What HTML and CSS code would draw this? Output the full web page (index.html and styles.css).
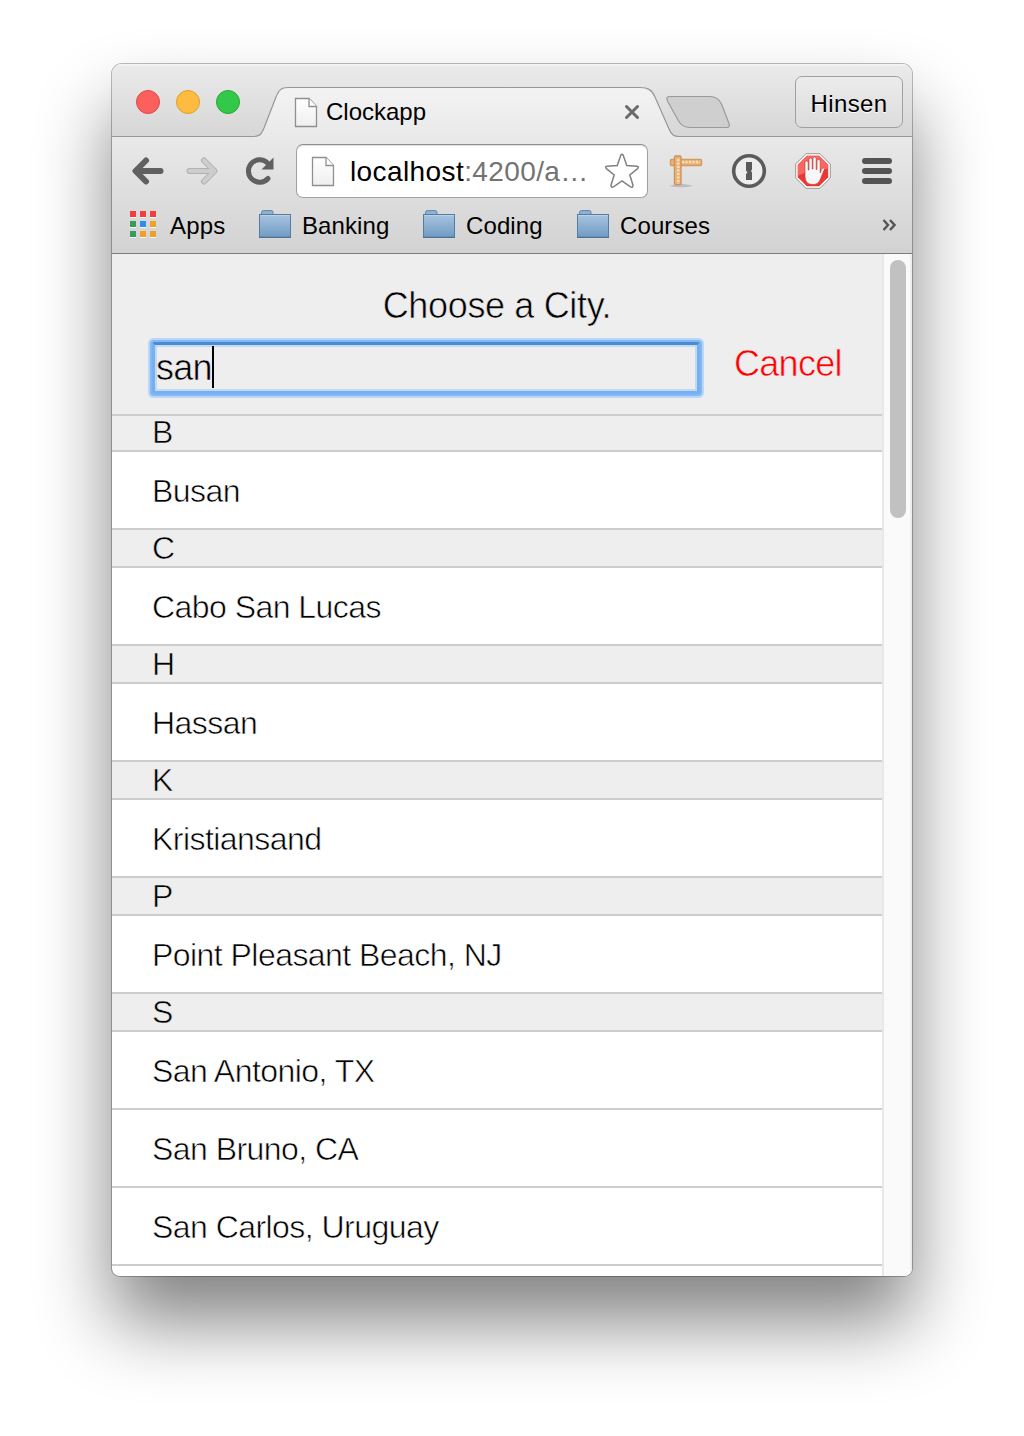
FILE: index.html
```
<!DOCTYPE html>
<html lang="en">
<head>
<meta charset="utf-8">
<title>Clockapp</title>
<link rel="stylesheet" href="styles.css">
</head>
<body>
<svg width="0" height="0" class="defs">
  <defs>
    <linearGradient id="folderFill" x1="0" y1="0" x2="0" y2="1"><stop offset="0" stop-color="#a9c4e0"/><stop offset="1" stop-color="#6f9bc3"/></linearGradient>
    <linearGradient id="pageFill" x1="0" y1="0" x2="0" y2="1"><stop offset="0" stop-color="#fff"/><stop offset="1" stop-color="#efefef"/></linearGradient>
    <symbol id="page" viewBox="0 0 24 32"><path d="M1.5 1.5h13.5l7.500 8v20h-21z" fill="url(#pageFill)" stroke="#8f8f8f" stroke-width="1.3"/><path d="M15 1.5v8h7.500" fill="#fff" stroke="#8f8f8f" stroke-width="1.3"/></symbol>
    <symbol id="folder" viewBox="0 0 32 28"><path d="M2.500 5V2.500Q2.500.6 4.500.6h8Q14 .6 14 2.500V5" fill="#8fb1d2" stroke="#5f86ac"/><rect x=".5" y="4.500" width="31" height="23" fill="url(#folderFill)" stroke="#557da4"/><path d="M1 5.600h30" stroke="#bed3e7"/><path d="M0 27.400h32" stroke="#4c7092" stroke-width="1.200"/></symbol>
  </defs>
</svg>
<div class="window">
  <header class="chrome">
    <div class="tabstrip">
      <svg class="tab-shape" width="800" height="74" viewBox="0 0 800 74">
        <defs><linearGradient id="tabFill" x1="0" y1="0" x2="0" y2="1"><stop offset="0" stop-color="#f3f3f3"/><stop offset="1" stop-color="#e9e9e9"/></linearGradient></defs>
        <path d="M-2 76V72.500H142C148 72.500 149.500 70 152 64L164 33C167 26 169 23.500 176 23.500H528C536 23.500 540 26 543 33L557 65C559.500 71 562 72.500 567 72.500H802V76z" fill="url(#tabFill)" stroke="#979797" stroke-width="1.200"/>
        <path d="M558 32.500H598C604 32.500 607 34.500 609.500 40L617 59.500C618 62 617 63.500 615 63.500H578C572 63.500 569 61.500 566 56L555.500 37C554 34 555 32.500 558 32.500z" fill="#cfcfcf" stroke="#9a9a9a" stroke-width="1.200"/>
      </svg>
      <div class="lights"><i class="light red"></i><i class="light yellow"></i><i class="light green"></i></div>
      <div class="tab">
        <svg width="24" height="32"><use href="#page"/></svg>
        <span class="tab-title">Clockapp</span>
        <svg width="16" height="16" viewBox="0 0 16 16"><path d="M2.500 2.500l11 11M13.500 2.500l-11 11" stroke="#6a6a6a" stroke-width="3" stroke-linecap="round"/></svg>
      </div>
      <div class="profile">Hinsen</div>
    </div>
    <div class="toolbar">
      <svg width="32" height="28" viewBox="0 0 32 28"><path d="M14 3.500L3.500 14 14 24.500M5 14h23.500" fill="none" stroke="#606060" stroke-width="6" stroke-linecap="round" stroke-linejoin="round"/></svg>
      <svg width="32" height="28" viewBox="0 0 32 28"><path d="M18 3.500L28.500 14 18 24.500M27 14H3.500" fill="none" stroke="#b0b0b0" stroke-width="6" stroke-linecap="round" stroke-linejoin="round"/><path d="M18 3.500L28.500 14 18 24.500M27 14H3.500" fill="none" stroke="#cdcdcd" stroke-width="4" stroke-linecap="round" stroke-linejoin="round"/></svg>
      <svg class="reload" width="28" height="28" viewBox="0 0 28 28"><path d="M22 21.500A11.200 11.200 0 1 1 21.500 6" fill="none" stroke="#606060" stroke-width="5" stroke-linecap="round"/><path d="M27.500 .5V12.500H15.500z" fill="#606060"/></svg>
      <div class="omnibox">
        <svg width="24" height="32"><use href="#page"/></svg>
        <span class="url">localhost<span class="path">:4200/a…</span></span>
        <svg width="36" height="36" viewBox="0 0 36 36"><path d="M16.800 2.200Q18 .2 19.200 2.200L22.800 12.600 33 13.200Q35.500 13.700 33.600 15.600L25.800 22 29 32.200Q29 35 26.500 33.900L18 28 9.500 33.900Q7 35 7 32.200L10.200 22 2.400 15.600Q.5 13.700 3 13.200L13.200 12.600z" fill="#fff" stroke="#808080" stroke-width="1.500"/></svg>
      </div>
      <div class="extensions">
        <svg width="36" height="36" viewBox="0 0 36 36"><path d="M1 33q12-4 24 0-12 2.500-24 0" fill="#bcbcbc"/><rect x="2.500" y="6.500" width="31" height="6" rx="1" fill="#e9b57c" stroke="#d39a62" stroke-width="1.400"/><path d="M14 9h18" stroke="#f9dfb8" stroke-width="2.500" stroke-dasharray="2 1.500"/><rect x="6.500" y="3" width="6.500" height="28.500" rx="1" fill="#e9b57c" stroke="#d0935a" stroke-width="1.400"/><path d="M10.300 6v25" stroke="#f9dfb8" stroke-width="2.500" stroke-dasharray="2 1.500"/></svg>
        <svg width="36" height="36" viewBox="0 0 36 36"><circle cx="18" cy="18" r="15.300" fill="#eee" stroke="#5b5b5b" stroke-width="3.600"/><path d="M15 9h6v7.500l-1 1.500 1 1.500V27h-6v-6l1.500-1.500L15 17.500z" fill="#5a5a5a"/></svg>
        <svg width="36" height="36" viewBox="0 0 36 36"><path d="M11 .7h14L35.300 11v14L25 35.300H11L.7 25V11z" fill="#fff" stroke="#969696"/><path d="M11.800 2.800h12.400l9 9v12.400l-9 9H11.800l-9-9V11.800z" fill="#ec3832"/><path d="M11.800 2.800h12.400l9 9v4q-15 0-30.400 7V11.800z" fill="#fa6762"/><path d="M10 20V9.500a1.600 1.600 0 0 1 3.200 0V17h.8V6.500a1.600 1.600 0 0 1 3.200 0V16h.8V5.500a1.600 1.600 0 0 1 3.200 0V16.500h.8V8a1.600 1.600 0 0 1 3.200 0V20L26.500 16q2-1.800 3 0L25 27q-2 4.500-7 4.500-8 0-8-8z" fill="#f7f7f7" stroke="#b43a35" stroke-width=".6"/></svg>
        <svg width="32" height="28" viewBox="0 0 32 28"><path d="M4 4h24M4 14h24M4 24h24" stroke="#545454" stroke-width="6" stroke-linecap="round"/></svg>
      </div>
    </div>
    <nav class="bookmarks">
      <div class="apps-icon"><i class="r"></i><i class="r"></i><i class="r"></i><i class="g"></i><i class="b"></i><i class="y"></i><i class="g"></i><i class="y"></i><i class="y"></i></div>
      <span class="apps-label">Apps</span>
      <div class="bookmark"><svg width="32" height="28"><use href="#folder"/></svg><span>Banking</span></div>
      <div class="bookmark"><svg width="32" height="28"><use href="#folder"/></svg><span>Coding</span></div>
      <div class="bookmark"><svg width="32" height="28"><use href="#folder"/></svg><span>Courses</span></div>
      <svg class="more" width="14" height="12" viewBox="0 0 14 12"><path d="M1.500 1l4.500 5-4.500 5M8 1l4.500 5L8 11" fill="none" stroke="#555" stroke-width="2.400"/></svg>
    </nav>
  </header>
  <div class="viewport">
    <main class="page">
      <section class="search">
        <h1>Choose a City.</h1>
        <div class="search-row">
          <div class="field"><span>san</span><i class="caret"></i></div>
          <a class="cancel">Cancel</a>
        </div>
      </section>
      <h2 class="letter first">B</h2>
      <div class="city">Busan</div>
      <h2 class="letter">C</h2>
      <div class="city">Cabo San Lucas</div>
      <h2 class="letter">H</h2>
      <div class="city">Hassan</div>
      <h2 class="letter">K</h2>
      <div class="city">Kristiansand</div>
      <h2 class="letter">P</h2>
      <div class="city">Point Pleasant Beach, NJ</div>
      <h2 class="letter">S</h2>
      <div class="city">San Antonio, TX</div>
      <div class="city">San Bruno, CA</div>
      <div class="city">San Carlos, Uruguay</div>
      <div class="city"></div>
    </main>
    <div class="scrollbar"><div class="thumb"></div></div>
  </div>
</div>
</body>
</html>
```
FILE: styles.css
```
* { box-sizing: border-box; }
html, body { margin: 0; height: 1436px; overflow: hidden; background: #fff; }
body { padding: 64px 112px 160px; font-family: "Liberation Sans", Arial, sans-serif; color: #000; }
.defs { position: absolute; }
svg { display: block; flex: none; }

.window {
  width: 800px; height: 1212px; border-radius: 10px 10px 8px 8px;
  display: flex; flex-direction: column; background: #fff;
  box-shadow: 0 0 0 1px rgba(0,0,0,.26), 0 46px 74px rgba(0,0,0,.49);
}
.chrome {
  flex: none; height: 190px; border-radius: 10px 10px 0 0; overflow: hidden;
  border-bottom: 1px solid #7d7d7d; background: linear-gradient(#e9e9e9 73px, #d2d2d2);
}
.tabstrip {
  position: relative; height: 73px; display: flex; align-items: flex-start;
  background: linear-gradient(#ebebeb, #d6d6d6); box-shadow: inset 0 2px 0 #f3f3f3;
}
.tab-shape { position: absolute; left: 0; top: 0; }
.lights { position: relative; display: flex; gap: 16px; padding: 26px 0 0 24px; width: 182px; }
.light { width: 24px; height: 24px; border-radius: 50%; border: 1px solid; }
.red { background: #fc605c; border-color: #e2463f; }
.yellow { background: #fdbc40; border-color: #dfa023; }
.green { background: #34c84a; border-color: #20a931; }
.tab { position: relative; display: flex; align-items: center; width: 346px; height: 32px; margin-top: 32px; }
.tab > svg:first-child { margin-top: 1px; }
.tab-title { flex: 1; padding-left: 8px; font-size: 24px; line-height: 32px; }
.profile {
  position: relative; width: 108px; height: 52px; margin: 12px 9px 0 auto; border: 1px solid #a0a0a0; border-radius: 7px;
  background: linear-gradient(#ececec, #dcdcdc); font-size: 24px; letter-spacing: .4px; line-height: 53px; text-align: center;
  text-shadow: 0 1px 0 #fff;
}
.toolbar { display: flex; align-items: center; height: 68px; padding: 0 19px 0 20px; }
.toolbar > svg + svg { margin-left: 22px; }
.toolbar > .reload { margin-left: 28px; }
.omnibox {
  display: flex; align-items: center; width: 352px; height: 54px; margin: 0 20px 0 22px; padding: 0 7px 0 14px;
  background: #fff; border: 1px solid #a2a2a2; border-top-color: #8e8e8e; border-radius: 7px; box-shadow: inset 0 1px 1px #ddd;
}
.omnibox > svg:first-child { margin-top: 1px; }
.url { flex: 1; padding: 2px 0 0 15px; font-size: 28px; letter-spacing: .4px; line-height: 32px; white-space: nowrap; }
.path { color: #737373; }
.extensions { display: flex; flex: 1; align-items: center; gap: 28px; }
.extensions svg:first-child { margin-right: -1px; }
.extensions svg:last-child { margin-left: auto; }
.bookmarks { display: flex; align-items: center; height: 44px; padding: 0 16px 4px 18px; font-size: 24px; line-height: 28px; }
.apps-icon { display: grid; grid-template-columns: repeat(3, 6px); grid-auto-rows: 6px; gap: 4px; margin-top: -2px; }
.apps-icon i { box-shadow: 0 1px 0 #fff; }
.r { background: #f43b3e; } .g { background: #3a9c5a; } .b { background: #2b8df5; } .y { background: #f0a025; }
.apps-label { margin: 2px 0 0 14px; width: 89px; letter-spacing: .2px; }
.bookmark { display: flex; gap: 11px; width: 164px; letter-spacing: .1px; }
.bookmark + .bookmark { width: 154px; }
.bookmark svg { margin-top: -1px; }
.bookmark span { margin-top: 1px; }
.more { margin-left: auto; }

.viewport { flex: 1; min-height: 0; display: flex; overflow: hidden; border-radius: 0 0 8px 8px; }
.page { width: 770px; overflow: hidden; letter-spacing: -.55px; -webkit-text-stroke: .6px #fff; }
.search { height: 160px; padding-top: 31px; background: #eee; -webkit-text-stroke-color: #eee; }
h1 { margin: 0; font-size: 36px; line-height: 42px; font-weight: 400; text-align: center; letter-spacing: -.35px; }
.search-row { display: flex; font-size: 36px; letter-spacing: -.7px; }
.field {
  display: flex; align-items: center; width: 548px; height: 52px; margin: 15px 0 0 40px; padding: 0 0 0 1px;
  border: 3px solid #76b0f0; border-top-color: #4b8bd0;
  box-shadow: 0 0 0 2px #82b8f3, 0 0 0 4px #b9d7f6, inset 0 0 0 2px #c1d9f2; border-radius: 2px;
}
.caret { width: 2px; height: 42px; background: #000; margin: -2px 0 0; }
.cancel { margin: 16px 0 0 34px; line-height: 42px; color: #f00; }
.letter {
  height: 40px; margin: 0 0 -2px; padding-left: 40px; border: solid #ccc; border-width: 2px 0;
  background: #eee; -webkit-text-stroke-color: #eee; font-size: 32px; line-height: 36px; font-weight: 400;
}
.first { height: 38px; line-height: 33px; }
.city { height: 80px; margin-bottom: -2px; padding-left: 40px; border: solid #ccc; border-width: 2px 0; font-size: 32px; line-height: 78px; }
.scrollbar { width: 30px; padding: 6px 4px 0 6px; background: #fafafa; border-left: 2px solid #e8e8e8; border-right: 2px solid #eee; }
.thumb { width: 16px; height: 258px; border-radius: 8px; background: #c1c1c1; }
```
